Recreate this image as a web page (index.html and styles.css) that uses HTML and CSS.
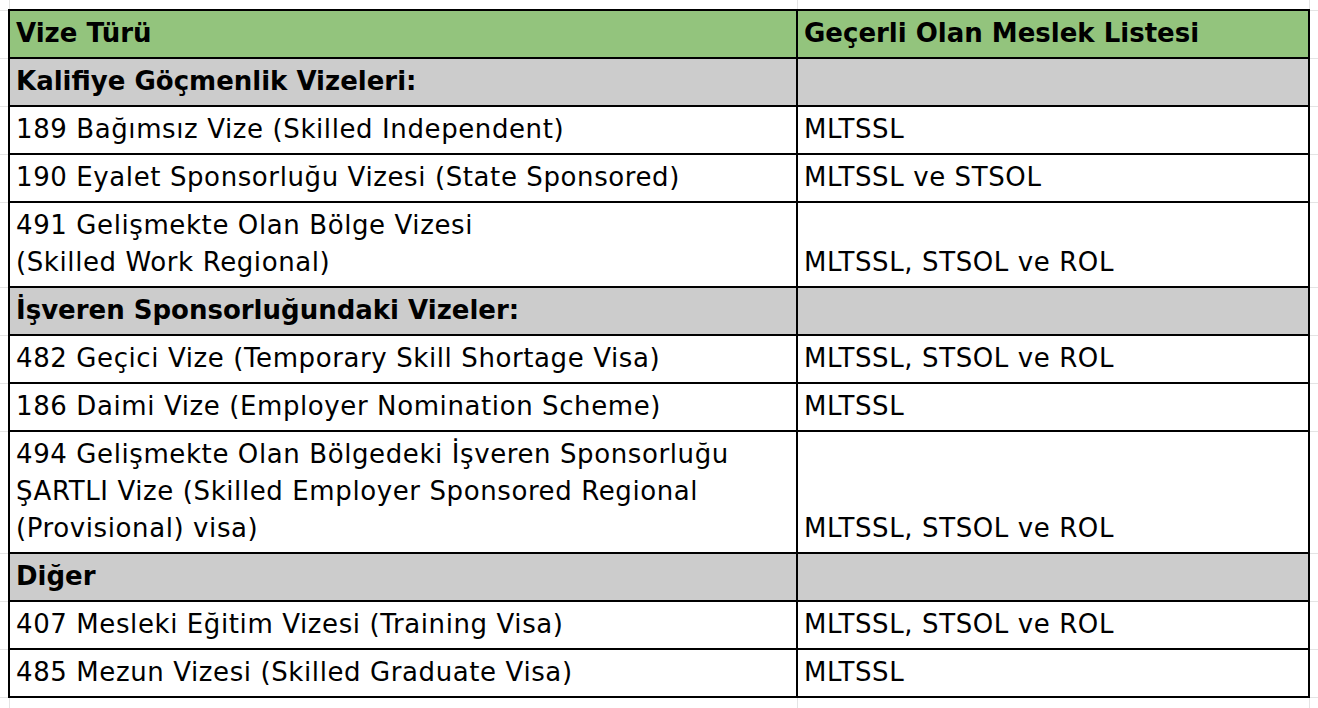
FILE: index.html
```html
<!DOCTYPE html>
<html lang="tr">
<head>
<meta charset="utf-8">
<title>Vize Türü</title>
<link rel="stylesheet" href="styles.css">
</head>
<body>
<table class="sheet">
  <colgroup>
    <col class="c-edge">
    <col class="c-a">
    <col class="c-b">
    <col class="c-edge-r">
  </colgroup>
  <tr class="spacer-top"><td class="grid"></td><td class="grid"></td><td class="grid"></td><td class="grid"></td></tr>
  <tr class="head"><td class="grid"></td><td class="cell">Vize Türü</td><td class="cell">Geçerli Olan Meslek Listesi</td><td class="grid"></td></tr>
  <tr class="group"><td class="grid"></td><td class="cell">Kalifiye Göçmenlik Vizeleri:</td><td class="cell"></td><td class="grid"></td></tr>
  <tr><td class="grid"></td><td class="cell">189 Bağımsız Vize (Skilled Independent)</td><td class="cell">MLTSSL</td><td class="grid"></td></tr>
  <tr><td class="grid"></td><td class="cell">190 Eyalet Sponsorluğu Vizesi (State Sponsored)</td><td class="cell">MLTSSL ve STSOL</td><td class="grid"></td></tr>
  <tr><td class="grid"></td><td class="cell">491 Gelişmekte Olan Bölge Vizesi<br>(Skilled Work Regional)</td><td class="cell">MLTSSL, STSOL ve ROL</td><td class="grid"></td></tr>
  <tr class="group"><td class="grid"></td><td class="cell">İşveren Sponsorluğundaki Vizeler:</td><td class="cell"></td><td class="grid"></td></tr>
  <tr><td class="grid"></td><td class="cell">482 Geçici Vize (Temporary Skill Shortage Visa)</td><td class="cell">MLTSSL, STSOL ve ROL</td><td class="grid"></td></tr>
  <tr><td class="grid"></td><td class="cell">186 Daimi Vize (Employer Nomination Scheme)</td><td class="cell">MLTSSL</td><td class="grid"></td></tr>
  <tr><td class="grid"></td><td class="cell">494 Gelişmekte Olan Bölgedeki İşveren Sponsorluğu<br>ŞARTLI Vize (Skilled Employer Sponsored Regional<br>(Provisional) visa)</td><td class="cell">MLTSSL, STSOL ve ROL</td><td class="grid"></td></tr>
  <tr class="group"><td class="grid"></td><td class="cell">Diğer</td><td class="cell"></td><td class="grid"></td></tr>
  <tr><td class="grid"></td><td class="cell">407 Mesleki Eğitim Vizesi (Training Visa)</td><td class="cell">MLTSSL, STSOL ve ROL</td><td class="grid"></td></tr>
  <tr><td class="grid"></td><td class="cell">485 Mezun Vizesi (Skilled Graduate Visa)</td><td class="cell">MLTSSL</td><td class="grid"></td></tr>
  <tr class="spacer-bottom"><td class="grid"></td><td class="grid"></td><td class="grid"></td><td class="grid"></td></tr>
</table>
</body>
</html>
```

FILE: styles.css
```css
html, body {
  margin: 0;
  padding: 0;
  background: #ffffff;
  overflow: hidden;
}

.sheet {
  border-collapse: collapse;
  table-layout: fixed;
  width: 1318px;
  font-family: "DejaVu Sans", sans-serif;
  font-size: 26px;
  line-height: 37px;
  color: #000;
}

.c-edge { width: 9px; }
.c-a { width: 788px; }
.c-b { width: 512px; }
.c-edge-r { width: 9px; }

.sheet td {
  padding: 0;
  vertical-align: bottom;
}

.grid {
  border: 1px solid #e4e4e4;
}

.cell {
  border: 2px solid #000;
  padding: 4px 6px 5px 6px !important;
  white-space: nowrap;
  overflow: hidden;
  letter-spacing: 0.6px;
}

.spacer-top td { height: 9px; border-top: none; }
.spacer-bottom td { height: 10px; border-bottom: none; }
.sheet tr td:first-child { border-left: none; }
.sheet tr td:last-child { border-right: none; }

.head .cell {
  background: #93c47d;
  font-weight: bold;
  letter-spacing: 0;
}

.group .cell {
  background: #cccccc;
  font-weight: bold;
  letter-spacing: 0;
}
```
